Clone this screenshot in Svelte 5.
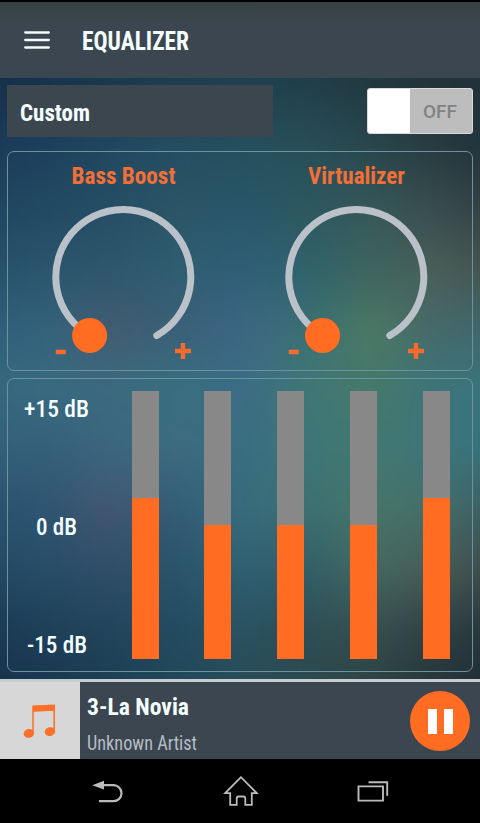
<script>
  const bands = [
    { from: 0, to: 0, colors: ['#142f4b', '#17334b', '#18384d', '#1b3e50', '#1d4051', '#213e4a', '#22383f', '#243239', '#22303a'] },
    { from: 0, to: 70, colors: ['#1b3b59', '#1d405d', '#21485f', '#264d62', '#24505d', '#284f59', '#29474d', '#273b41', '#22323a'] },
    { from: 70, to: 132, colors: ['#1f4560', '#234a63', '#254e66', '#2a5666', '#29566a', '#2c5860', '#36585a', '#3a4d4e', '#303f42'] },
    { from: 132, to: 192, colors: ['#25506c', '#2b566d', '#2e566d', '#305d70', '#2f5f78', '#30636d', '#3e655f', '#495f58', '#435250'] },
    { from: 192, to: 252, colors: ['#2f5f7a', '#33637c', '#435c70', '#3a6078', '#3c6684', '#3b7074', '#4b7964', '#46696a', '#3d686d'] },
    { from: 252, to: 312, colors: ['#35677f', '#386a80', '#3b6a80', '#386f7e', '#3c6c86', '#3f7776', '#46796b', '#3c757a', '#3a747d'] },
    { from: 312, to: 372, colors: ['#335f7b', '#35607a', '#3c657e', '#3d6b80', '#386d80', '#3d7678', '#43786f', '#3d757b', '#37717a'] },
    { from: 372, to: 432, colors: ['#29516e', '#2e5571', '#435673', '#335c76', '#376b7d', '#3c7072', '#467567', '#456e69', '#3a5c5f'] },
    { from: 432, to: 492, colors: ['#234864', '#274d67', '#304e69', '#29536a', '#2f6073', '#315e68', '#436860', '#4a5b57', '#3a4949'] },
    { from: 492, to: 552, colors: ['#1b3954', '#1e4059', '#22455b', '#234b60', '#2a5261', '#2d4d55', '#37504e', '#304044', '#25363d'] },
    { from: 552, to: 601, colors: ['#18334c', '#1a3850', '#1d3f55', '#214759', '#284d59', '#2c4a50', '#2e4445', '#27373c', '#1f2d35'] }
  ];
  const levels = [60, 50, 50, 50, 60];
  const knobs = ['Bass Boost', 'Virtualizer'];
  const widths = [104, 97];
</script>

<div class="phone">
  <div class="status"></div>
  <header>
    <svg class="menu" width="26" height="20" viewBox="0 0 26 20">
      <path d="M1.2 2.5H24.8M1.2 10H24.8M1.2 17.5H24.8" />
    </svg>
    <svg class="title" width="112" height="36"><text x="0" y="28" textLength="107" lengthAdjust="spacingAndGlyphs">EQUALIZER</text></svg>
  </header>

  <main>
    <div class="backdrop">
      <div class="haze">
        {#each bands as b}
          <i style="background:linear-gradient(90deg,{b.colors.join(',')});mask-image:linear-gradient(#0000 {b.from}px,#000 {b.to}px)"></i>
        {/each}
      </div>
    </div>

    <div class="preset-row">
      <div class="preset">
        <svg width="80" height="36"><text x="0" y="26" textLength="70" lengthAdjust="spacingAndGlyphs">Custom</text></svg>
      </div>
      <div class="switch">
        <span class="handle"></span>
        <span class="off"><svg width="36" height="24"><text x="0" y="19" textLength="34" lengthAdjust="spacingAndGlyphs">OFF</text></svg></span>
      </div>
    </div>

    <section class="knobs">
      {#each knobs as name, i}
        <svg class="knob" width="233" height="218" viewBox="-0.3 0 233 218">
          <text class="name" x={115.2 - widths[i] / 2} y="32" textLength={widths[i]} lengthAdjust="spacingAndGlyphs">{name}</text>
          <path class="arc" d="M81.5 183.5A67.5 67.5 0 1 1 148.5 183.5" />
          <circle class="thumb" cx="81.3" cy="183.5" r="17.5" />
          <path class="sign" d="M47.5 200H57.5M166.7 199H182.7M174.7 191V207" />
        </svg>
      {/each}
    </section>

    <section class="bands">
      <div class="scale">
        <svg width="66" height="36"><text x="0" y="26.5" textLength="65" lengthAdjust="spacingAndGlyphs">+15 dB</text></svg>
        <svg width="42" height="36"><text x="0" y="26.5" textLength="41" lengthAdjust="spacingAndGlyphs">0 dB</text></svg>
        <svg width="60" height="36"><text x="0" y="26.5" textLength="60" lengthAdjust="spacingAndGlyphs">-15 dB</text></svg>
      </div>
      <div class="bars">
        {#each levels as level}
          <div class="bar"><div class="fill" style="height:{level}%"></div></div>
        {/each}
      </div>
    </section>
  </main>

  <div class="player">
    <div class="cover">
      <svg width="34" height="36" viewBox="0 0 34 36">
        <path d="M9.3 2.4 32 1.5V7.8L10.8 8.8V30H9.3Z" />
        <path d="M30.4 3H32V28H30.4Z" />
        <ellipse cx="5.9" cy="30.4" rx="5.3" ry="4.4" transform="rotate(-12 5.9 30.4)" />
        <ellipse cx="27" cy="28.6" rx="5.3" ry="4.4" transform="rotate(-12 27 28.6)" />
      </svg>
    </div>
    <div class="track">
      <svg class="song" width="110" height="34"><text x="0" y="26" textLength="102" lengthAdjust="spacingAndGlyphs">3-La Novia</text></svg>
      <svg class="artist" width="120" height="30"><text x="0" y="22" textLength="110" lengthAdjust="spacingAndGlyphs">Unknown Artist</text></svg>
    </div>
    <div class="pause"><span></span><span></span></div>
  </div>

  <nav>
    <svg width="34" height="36" viewBox="0 0 34 36">
      <path d="M10 11.2H22.5A8 8 0 0 1 22.5 27.2H8" stroke-width="2.2" />
      <path class="head" d="M1.2 11.2 13 6.8V15.4Z" />
    </svg>
    <svg width="36" height="36" viewBox="0 0 36 36">
      <path d="M18 3.2 2.2 19.2H7.2V30.8H13.7V24.5Q13.7 22.5 15.7 22.5H20.3Q22.3 22.5 22.3 24.5V30.8H28.8V19.2H33.8Z" stroke-width="1.8" />
    </svg>
    <svg width="34" height="36" viewBox="0 0 34 36">
      <path d="M2.5 12.4H27V26.6H2.5ZM12.5 8.2H31.2V21.8" stroke-width="1.9" />
    </svg>
  </nav>
</div>

<style>
  :global(body) { margin: 0; background: #000; }
  .phone { width: 480px; height: 823px; display: flex; flex-direction: column; overflow: hidden; background: #000; font-family: Roboto, "Liberation Sans", sans-serif; font-stretch: 75%; }
  svg { display: block; flex: none; overflow: visible; }
  text { fill: #f5feff; }
  .status { height: 2px; flex: none; background: #000; }
  header { height: 76px; box-sizing: border-box; flex: none; display: flex; align-items: center; padding: 0 0 0 24px; gap: 32px; background: linear-gradient(#37413f, #39444a 12px, #3b4650 20px, #3b4650 68px, #394850); }
  .menu path { stroke: #f2fafa; stroke-width: 2.3; stroke-linecap: round; }
  .title text { font-size: 25px; font-weight: 700; }
  main { position: relative; isolation: isolate; height: 601px; flex: none; box-sizing: border-box; padding: 7px 7px 7px; display: flex; flex-direction: column; }
  .backdrop { position: absolute; inset: 0; z-index: -1; background: #1c3844; overflow: hidden; }
  .haze { position: absolute; inset: 0; filter: blur(9px); }
  .haze i { position: absolute; inset: 0 -20px -20px; }
  .haze i:first-child { top: -20px; mask-image: none !important; }
  .preset-row { display: flex; justify-content: space-between; height: 52px; }
  .preset { width: 266px; background: #3b464f; box-sizing: border-box; padding: 10px 13px; }
  .preset text { font-size: 24.5px; font-weight: 700; }
  .switch { width: 106px; height: 46px; margin-top: 3px; display: flex; border: 1px solid #d8dada; border-radius: 3px; box-sizing: border-box; overflow: hidden; background: #bdbdbd; }
  .handle { width: 42px; background: #fff; }
  .off { flex: 1; padding: 10px 0 0 13px; }
  .off text { font-size: 19px; font-weight: 500; fill: #828282; font-stretch: 100%; }
  section { border: 1px solid #6d929f; border-radius: 7px; box-sizing: border-box; }
  .knobs { height: 220px; margin-top: 14px; display: flex; }
  .knob .name { font-size: 24.5px; font-weight: 700; fill: #f26f36; }
  .arc { fill: none; stroke: #bbc1c8; stroke-width: 7; stroke-linecap: round; }
  .thumb { fill: #ff6c22; }
  .sign { fill: none; stroke: #f76c2c; stroke-width: 4.4; }
  .bands { height: 294px; margin-top: 7px; display: flex; padding: 12px 22px 12px 0; }
  .scale { width: 98px; display: flex; flex-direction: column; align-items: center; justify-content: space-between; margin: -1px 0 -3px; }
  .scale text { font-size: 24.5px; font-weight: 500; }
  .bars { flex: 1; display: flex; justify-content: space-between; margin-left: 25.5px; }
  .bar { width: 27px; display: flex; align-items: flex-end; background: #888; }
  .fill { width: 100%; background: #ff6c22; }
  .player { height: 80px; flex: none; box-sizing: border-box; border-top: 3px solid #c8ccd1; display: flex; background: #3b4650; padding-right: 10px; }
  .cover { width: 80px; background: #d7d7d7; display: flex; align-items: center; justify-content: center; }
  .cover path, .cover ellipse { fill: #fa7028; }
  .track { flex: 1; padding-left: 7px; }
  .song { margin-top: 7px; }
  .song text { font-size: 24.5px; font-weight: 700; }
  .artist { margin-top: 5px; }
  .artist text { font-size: 19.5px; fill: #b6bdc4; }
  .pause { width: 60px; height: 60px; margin-top: 9px; border-radius: 50%; background: #ff6c22; display: flex; align-items: center; justify-content: center; gap: 7px; }
  .pause span { width: 9px; height: 25px; background: #fff; }
  nav { height: 64px; flex: none; background: #000; display: flex; justify-content: space-between; padding: 15px 90px 0 91px; box-sizing: border-box; }
  nav path { fill: none; stroke: #bbb; }
  nav .head { fill: #bbb; stroke: none; }
</style>
